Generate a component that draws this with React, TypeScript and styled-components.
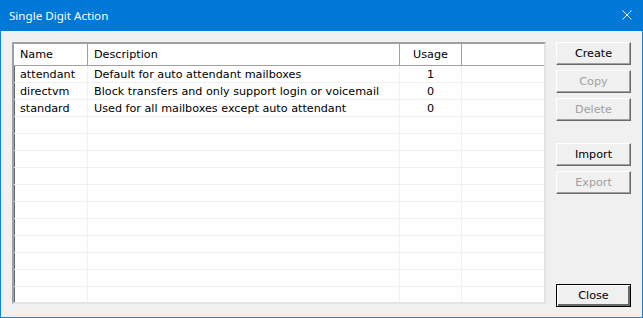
import styled, { createGlobalStyle } from "styled-components";

const GlobalStyle = createGlobalStyle`
  html, body {
    margin: 0;
    padding: 0;
    background: #ffffff;
  }
  * {
    box-sizing: border-box;
  }
`;

type Row = { name: string; description: string; usage: string };

const rows: Row[] = [
  { name: "attendant", description: "Default for auto attendant mailboxes", usage: "1" },
  { name: "directvm", description: "Block transfers and only support login or voicemail", usage: "0" },
  { name: "standard", description: "Used for all mailboxes except auto attendant", usage: "0" },
];

const EMPTY_ROWS = 11;

const App = () => {
  const filler = Array.from({ length: EMPTY_ROWS });
  return (
    <>
      <GlobalStyle />
      <Window>
        <TitleBar>
          <Title>Single Digit Action</Title>
          <CloseGlyph>
            <svg width="10" height="10" viewBox="0 0 10 10">
              <path d="M0.5 0.5 L9.5 9.5 M9.5 0.5 L0.5 9.5" stroke="#ffffff" strokeWidth="1" fill="none" />
            </svg>
          </CloseGlyph>
        </TitleBar>
        <Body>
          <ListBox>
            <HeaderRow>
              <HeadCell>Name</HeadCell>
              <HeadCell>Description</HeadCell>
              <HeadCell $center>Usage</HeadCell>
              <HeadCell />
            </HeaderRow>
            {rows.map((r) => (
              <DataRow key={r.name}>
                <Cell>{r.name}</Cell>
                <Cell>{r.description}</Cell>
                <Cell $center>{r.usage}</Cell>
                <Cell />
              </DataRow>
            ))}
            {filler.map((_, i) => (
              <DataRow key={i}>
                <Cell />
                <Cell />
                <Cell />
                <Cell />
              </DataRow>
            ))}
          </ListBox>
          <ButtonColumn>
            <Button>Create</Button>
            <Button $disabled>Copy</Button>
            <Button $disabled>Delete</Button>
            <Button $gapBefore>Import</Button>
            <Button $disabled>Export</Button>
            <Button $default $push>
              Close
            </Button>
          </ButtonColumn>
        </Body>
      </Window>
    </>
  );
};

export default App;

const Window = styled.div`
  width: 643px;
  height: 318px;
  display: flex;
  flex-direction: column;
  background: #f0f0f0;
  border: 1px solid #1883d7;
  border-top: none;
  font-family: "DejaVu Sans", Tahoma, sans-serif;
  font-size: 11.2px;
  color: #000000;
`;

const TitleBar = styled.div`
  height: 31px;
  margin: 0 -1px;
  background: #0078d7;
  display: flex;
  align-items: center;
  justify-content: space-between;
  padding: 0 11px 0 9px;
`;

const Title = styled.div`
  color: #ffffff;
  font-family: "Noto Sans", "Liberation Sans", sans-serif;
  font-size: 11.6px;
  padding-bottom: 1px;
`;

const CloseGlyph = styled.div`
  width: 10px;
  height: 10px;
  display: flex;
  margin-top: -1px;
`;

const Body = styled.div`
  flex: 1;
  display: flex;
  gap: 10px;
  padding: 11px 11px 10px 11px;
`;

const ListBox = styled.div`
  width: 534px;
  height: 262px;
  overflow: hidden;
  background: #ffffff;
  border-style: solid;
  border-width: 2px;
  border-color: #a0a0a0 #e3e3e3 #e3e3e3 #a0a0a0;
  box-shadow: inset 1px 1px 0 #696969;
  display: flex;
  flex-direction: column;
`;

const columns = "74px 312px 62px 1fr";

const HeaderRow = styled.div`
  display: grid;
  grid-template-columns: ${columns};
  height: 22px;
  flex: none;
  background: #ffffff;
  border-bottom: 1px solid #a0a0a0;
`;

const HeadCell = styled.div<{ $center?: boolean }>`
  display: flex;
  align-items: center;
  justify-content: ${(p) => (p.$center ? "center" : "flex-start")};
  padding-left: ${(p) => (p.$center ? "0" : "6px")};
  border-right: 1px solid #a0a0a0;
  white-space: nowrap;
  &:last-child {
    border-right: none;
  }
`;

const DataRow = styled.div`
  display: grid;
  grid-template-columns: ${columns};
  height: 17px;
  flex: none;
  border-bottom: 1px solid #f0f0f0;
`;

const Cell = styled.div<{ $center?: boolean }>`
  display: flex;
  align-items: center;
  justify-content: ${(p) => (p.$center ? "center" : "flex-start")};
  padding-left: ${(p) => (p.$center ? "0" : "6px")};
  border-right: 1px solid #f0f0f0;
  white-space: nowrap;
  overflow: hidden;
  &:last-child {
    border-right: none;
  }
`;

const ButtonColumn = styled.div`
  width: 75px;
  display: flex;
  flex-direction: column;
  gap: 5px;
`;

const Button = styled.div<{
  $disabled?: boolean;
  $default?: boolean;
  $gapBefore?: boolean;
  $push?: boolean;
}>`
  height: 23px;
  flex: none;
  display: flex;
  align-items: center;
  justify-content: center;
  background: #f0f0f0;
  color: ${(p) => (p.$disabled ? "#a0a0a0" : "#000000")};
  border: 1px solid;
  border-color: ${(p) =>
    p.$default ? "#000000" : "#ffffff #696969 #696969 #ffffff"};
  box-shadow: ${(p) =>
    p.$default
      ? "inset 1px 1px 0 #ffffff, inset -2px -2px 0 #696969"
      : "inset -1px -1px 0 #a0a0a0"};
  margin-top: ${(p) => (p.$push ? "auto" : p.$gapBefore ? "17px" : "0")};
`;
